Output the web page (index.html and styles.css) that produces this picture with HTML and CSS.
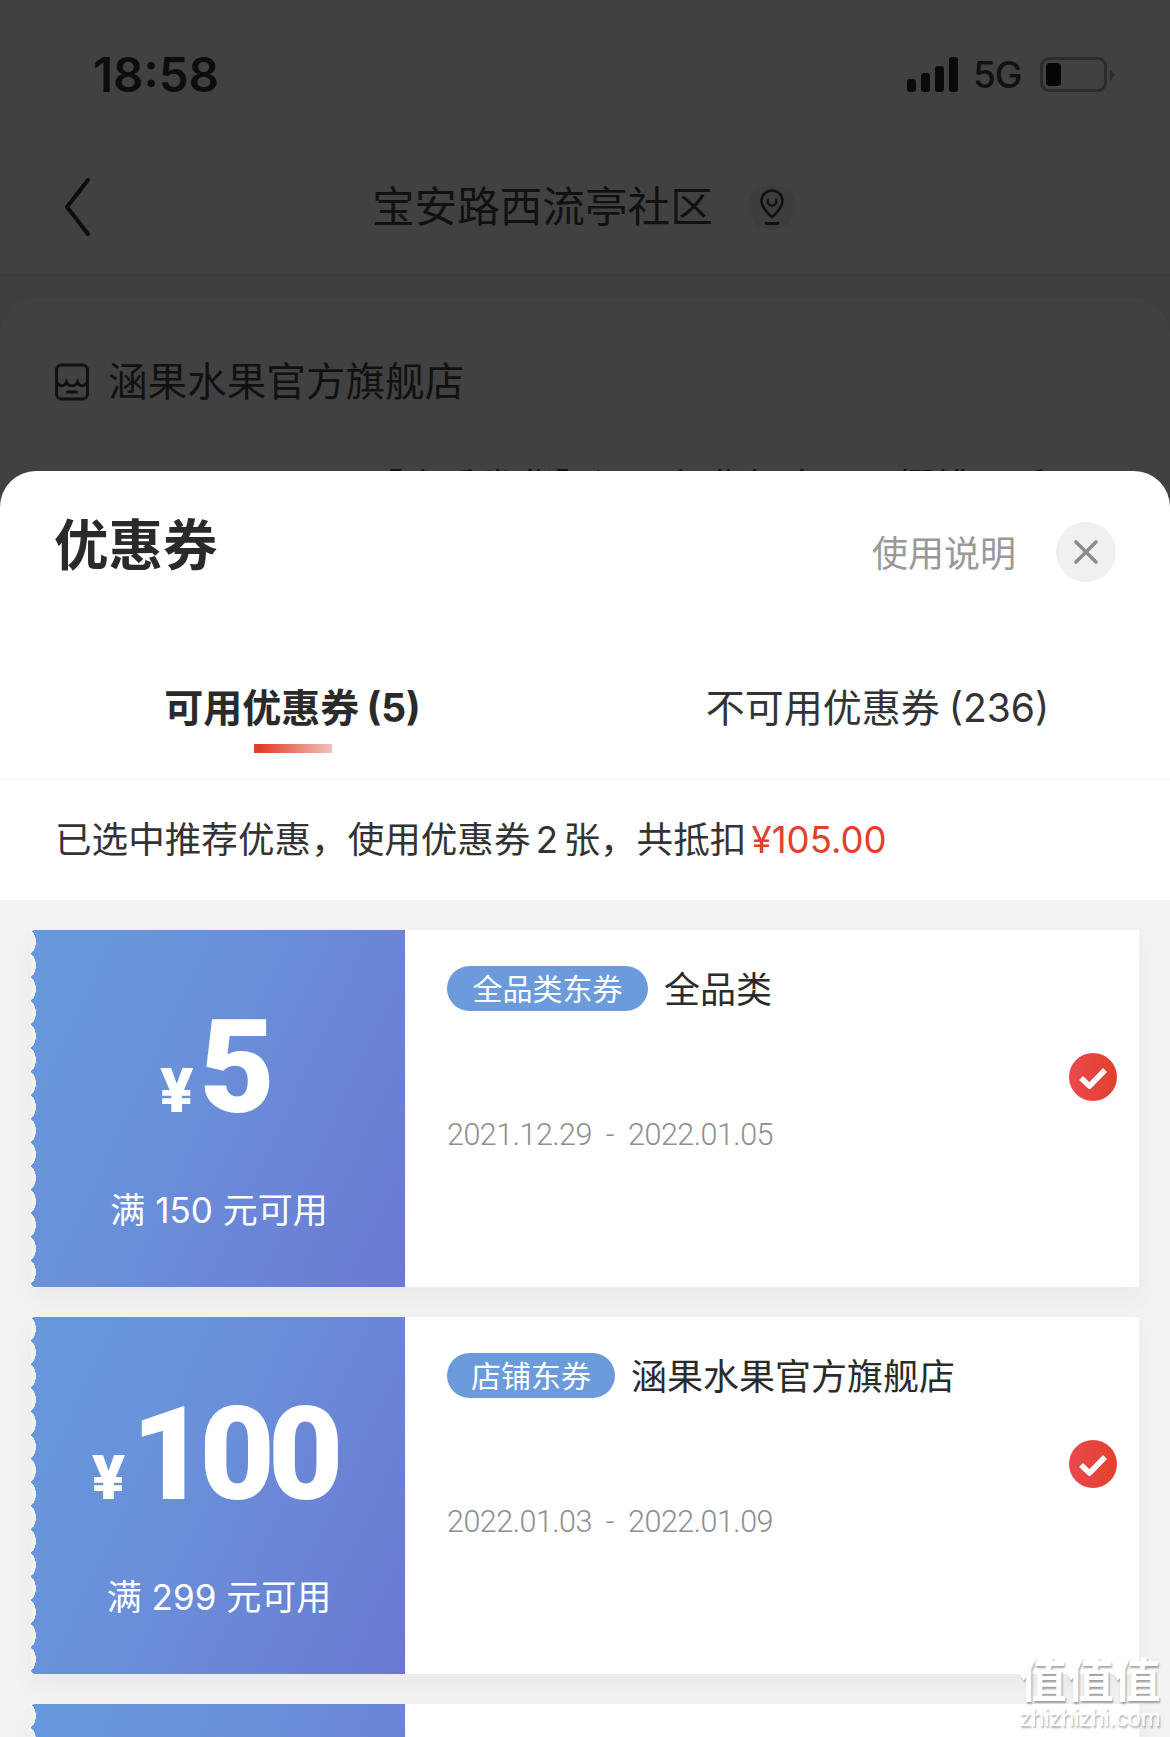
FILE: index.html
```html
<!DOCTYPE html>
<html lang="zh-CN">
<head>
<meta charset="utf-8">
<title>优惠券</title>
<link rel="stylesheet" href="styles.css">
</head>
<body>
<div class="page">
  <div class="backdrop">
    <div class="status">
      <span class="time">18:58</span>
      <div class="status-right">
        <svg class="signal" width="52" height="35" viewBox="0 0 52 35"><rect x="0" y="22" width="9" height="13" rx="3"/><rect x="14" y="16" width="9" height="19" rx="3"/><rect x="28" y="9" width="9" height="26" rx="3"/><rect x="42" y="0" width="9" height="35" rx="3"/></svg>
        <span class="net">5G</span>
        <div class="battery"><span class="battery-fill"></span></div>
        <span class="battery-nub"></span>
      </div>
    </div>
    <div class="nav">
      <svg class="back" width="26" height="58" viewBox="0 0 26 58"><path d="M24 2 L3 29 L24 56" fill="none" stroke="#0d0d0d" stroke-width="4" stroke-linecap="round" stroke-linejoin="round"/></svg>
      <span class="nav-title">宝安路西流亭社区</span>
      <span class="pin-wrap">
        <svg width="26" height="38" viewBox="0 0 26 38"><path d="M13 2.500C6.800 2.500 2.500 7.200 2.500 12.800 2.500 18.500 8.500 25.500 13 29 17.500 25.500 23.500 18.500 23.500 12.800 23.500 7.200 19.200 2.500 13 2.500Z" fill="none" stroke="#111" stroke-width="2.600"/><path d="M8.800 11.500V13.500A4.200 4.200 0 0 0 17.200 13.500V11.500" fill="none" stroke="#111" stroke-width="2.400" stroke-linecap="round"/><path d="M7 35.500H19" stroke="#111" stroke-width="2.800" stroke-linecap="round"/></svg>
      </span>
    </div>
    <div class="under">
      <div class="bg-card">
        <div class="store">
          <svg width="38" height="38" viewBox="0 0 37 38"><path d="M3 20V7A5 5 0 0 1 8 2H29A5 5 0 0 1 34 7V20M3 20V31A5 5 0 0 0 8 36H29A5 5 0 0 0 34 31V20" fill="none" stroke="#111" stroke-width="3"/><path d="M3 18C5 24 11 24 13 19 15 24 22 24 24 19 26 24 32 24 34 18" fill="none" stroke="#111" stroke-width="3" stroke-linecap="round"/><path d="M14 29H23" stroke="#111" stroke-width="3" stroke-linecap="round"/></svg>
          <span class="store-name">涵果水果官方旗舰店</span>
        </div>
        <div class="product">【应季发货】涵果年货如意可可樱桃一手</div>
      </div>
    </div>
  </div>

  <section class="sheet">
    <header class="sheet-head">
      <h1 class="sheet-title">优惠券</h1>
      <div class="sheet-actions">
        <span class="help">使用说明</span>
        <span class="close">
          <svg width="26" height="26" viewBox="0 0 26 26"><path d="M3 3L23 23M23 3L3 23" stroke="#8c8c8c" stroke-width="3.600" stroke-linecap="round"/></svg>
        </span>
      </div>
    </header>

    <nav class="tabs">
      <div class="tab tab-active">
        <span class="tab-label">可用优惠券 (5)</span>
        <span class="tab-bar"></span>
      </div>
      <div class="tab">
        <span class="tab-label">不可用优惠券 (236)</span>
      </div>
    </nav>

    <p class="summary">已选中推荐优惠，使用优惠券 2 张，共抵扣 <em class="summary-amount">¥105.00</em></p>

    <div class="list">
      <article class="coupon">
        <div class="coupon-left">
          <div class="amount"><span class="yen">¥</span><span class="value">5</span></div>
          <div class="cond">满 150 元可用</div>
        </div>
        <div class="coupon-right">
          <div class="coupon-info">
            <div class="coupon-title"><span class="pill pill-wide">全品类东券</span><span class="coupon-name">全品类</span></div>
            <div class="dates">2021.12.29 - 2022.01.05</div>
          </div>
          <svg class="check" width="48" height="48" viewBox="0 0 48 48"><defs><linearGradient id="chk" x1="0" y1="0" x2="1" y2="0"><stop offset="0" stop-color="#e9494f"/><stop offset="1" stop-color="#e2412c"/></linearGradient></defs><circle cx="24" cy="24" r="24" fill="url(#chk)"/><path d="M12 25L20.500 33 36 17" fill="none" stroke="#fff" stroke-width="5.500" stroke-linejoin="round"/></svg>
        </div>
      </article>

      <article class="coupon">
        <div class="coupon-left">
          <div class="amount"><span class="yen">¥</span><span class="value">100</span></div>
          <div class="cond">满 299 元可用</div>
        </div>
        <div class="coupon-right">
          <div class="coupon-info">
            <div class="coupon-title"><span class="pill">店铺东券</span><span class="coupon-name">涵果水果官方旗舰店</span></div>
            <div class="dates">2022.01.03 - 2022.01.09</div>
          </div>
          <svg class="check" width="48" height="48" viewBox="0 0 48 48"><circle cx="24" cy="24" r="24" fill="url(#chk)"/><path d="M12 25L20.500 33 36 17" fill="none" stroke="#fff" stroke-width="5.500" stroke-linejoin="round"/></svg>
        </div>
      </article>

      <article class="coupon">
        <div class="coupon-left"></div>
        <div class="coupon-right"></div>
      </article>
    </div>
  </section>

  <div class="watermark">
    <span class="wm-mark">值值值</span>
    <span class="wm-site">zhizhizhi.com</span>
  </div>
</div>
</body>
</html>
```
FILE: styles.css
```css
* { box-sizing: border-box; }
html, body { margin: 0; padding: 0; }
body {
  width: 1170px;
  height: 1737px;
  overflow: hidden;
  background: #414141;
  font-family: "Inter", "Noto Sans CJK SC", sans-serif;
  color: #2b2b2b;
}
.page { position: relative; width: 1170px; height: 1737px; overflow: hidden; display: flex; flex-direction: column; }

/* dimmed page behind the sheet */
.backdrop { height: 471px; flex: none; overflow: hidden; color: #111; display: flex; flex-direction: column; }
.status { height: 141px; flex: none; padding: 8px 55px 0 93px; display: flex; align-items: center; justify-content: space-between; }
.time { font-size: 47.500px; font-weight: 600; color: #0d0d0d; line-height: 1; }
.status-right { display: flex; align-items: center; }
.signal { fill: #0a0a0a; display: block; }
.net { margin-left: 14px; width: 49px; font-size: 37px; font-weight: 500; line-height: 1; color: #111; font-family: "Inter", sans-serif; letter-spacing: -1px; }
.battery { margin-left: 18px; width: 67px; height: 35px; border: 3px solid #2c2c2c; border-radius: 9px; padding: 3px; }
.battery-fill { display: block; width: 15px; height: 100%; background: #050505; border-radius: 4px; }
.battery-nub { margin-left: 3px; width: 0; height: 0; border-left: 5px solid #2c2c2c; border-top: 6px solid transparent; border-bottom: 6px solid transparent; }

.nav { height: 132px; flex: none; padding-left: 64px; display: flex; align-items: center; }
.back { display: block; }
.nav-title { margin-left: 282px; font-size: 42.600px; line-height: 56px; white-space: nowrap; }
.pin-wrap { margin-left: 36px; width: 46px; height: 46px; border-radius: 50%; background: #3d3d3d; display: flex; align-items: center; justify-content: center; }

.under { flex: 1; background: #3e3e3e; padding-top: 25px; }
.bg-card { height: 300px; background: #414141; border-radius: 36px 36px 0 0; padding: 62px 0 0 53px; }
.store { display: flex; align-items: center; height: 44px; }
.store-name { margin-left: 17px; font-size: 39.600px; line-height: 44px; white-space: nowrap; }
.product { margin: 58px 0 0 312px; font-size: 38px; line-height: 50px; white-space: nowrap; }

/* sheet */
.sheet { flex: 1; min-height: 0; background: #fff; border-radius: 36px 36px 0 0; overflow: hidden; display: flex; flex-direction: column; }
.sheet-head { height: 189px; flex: none; padding: 47px 54px 0 54px; display: flex; justify-content: space-between; align-items: flex-start; }
.sheet-title { margin: 0; font-size: 54.500px; line-height: 54px; font-weight: 700; color: #2a2a2a; }
.sheet-actions { margin-top: 4px; display: flex; align-items: flex-start; }
.help { padding-top: 2px; font-size: 36px; line-height: 60px; color: #999; }
.close { margin-left: 40px; width: 60px; height: 60px; border-radius: 50%; background: #f0f0f0; display: flex; align-items: center; justify-content: center; }

.tabs { height: 120px; flex: none; padding-top: 24px; display: grid; grid-template-columns: 1fr 1fr; border-bottom: 1px solid #f4f4f4; }
.tab { display: flex; flex-direction: column; align-items: center; }
.tab-label { font-size: 39px; line-height: 48px; color: #333; white-space: nowrap; word-spacing: -2px; }
.tab-active .tab-label { font-weight: 700; color: #2a2a2a; }
.tab-bar { margin-top: 12px; width: 78px; height: 9px; background: linear-gradient(90deg, #e2402c 0%, #e2402c 10%, #f3c3bb 100%); }

.summary { margin: 0; height: 120px; flex: none; padding-left: 55px; font-size: 36.600px; line-height: 120px; word-spacing: -5px; color: #333; white-space: nowrap; }
.summary-amount { font-style: normal; color: #e2402c; }

.list { flex: 1; min-height: 0; overflow: hidden; background: #f2f2f2; padding: 30px 31px 0; display: flex; flex-direction: column; gap: 30px; }
.coupon { flex: none; height: 357px; display: flex; background: #fff; box-shadow: 0 12px 24px rgba(0,0,0,.035); }
.coupon-left {
  position: relative;
  flex: none;
  width: 374px;
  padding-top: 75px;
  border-radius: 4px 0 0 4px;
  background: linear-gradient(115deg, #6699db 0%, #6a8fd9 45%, #6b78d3 100%);
  color: #fff;
  text-align: center;
}
.coupon-left::before {
  content: "";
  position: absolute;
  left: 0;
  top: 0;
  bottom: 0;
  width: 6px;
  background: radial-gradient(ellipse 8px 12.500px at -3px 50%, #f2f2f2 96%, rgba(242,242,242,0) 100%) 0 0 / 6px 23.600px repeat-y;
}
.amount { height: 120px; display: flex; justify-content: center; align-items: baseline; padding-right: 8px; }
.yen { position: relative; top: 3px; font-family: "Roboto", sans-serif; font-weight: 900; font-size: 62px; line-height: 120px; }
.value { position: relative; top: 3px; margin-left: 6px; font-family: "Roboto", sans-serif; font-weight: 900; font-size: 130px; line-height: 120px; letter-spacing: -7px; }
.cond { margin-top: 63px; padding-left: 2px; font-size: 35px; line-height: 44px; white-space: nowrap; }

.coupon-right { flex: 1; display: flex; align-items: flex-start; justify-content: space-between; padding: 36px 22px 0 42px; }
.coupon-info { min-width: 0; }
.coupon-title { display: flex; align-items: center; height: 45px; }
.pill { padding: 1px 24px 0; height: 45px; border-radius: 23px; background: #6b9bdb; color: #fff; font-size: 30px; line-height: 45px; white-space: nowrap; }
.pill-wide { padding: 1px 25.500px 0; }
.coupon-name { margin-left: 16px; padding-top: 3px; font-size: 36px; line-height: 45px; color: #2b2b2b; white-space: nowrap; }
.dates { margin-top: 104px; font-family: "Roboto", sans-serif; font-weight: 300; font-size: 30.500px; line-height: 40px; letter-spacing: -0.500px; word-spacing: 7px; color: #8e8e8e; white-space: nowrap; }
.check { flex: none; display: block; margin-top: 87px; }

/* site stamp over the corner */
.watermark { position: absolute; right: 9px; bottom: 6px; width: 142px; display: flex; flex-direction: column; align-items: center; color: #fff; text-shadow: 1px 2px 2px rgba(0,0,0,.35); }
.wm-mark { font-size: 47px; line-height: 50px; font-weight: 700; white-space: nowrap; }
.wm-site { font-family: "Liberation Sans", sans-serif; font-size: 23.500px; line-height: 26px; white-space: nowrap; }
```
